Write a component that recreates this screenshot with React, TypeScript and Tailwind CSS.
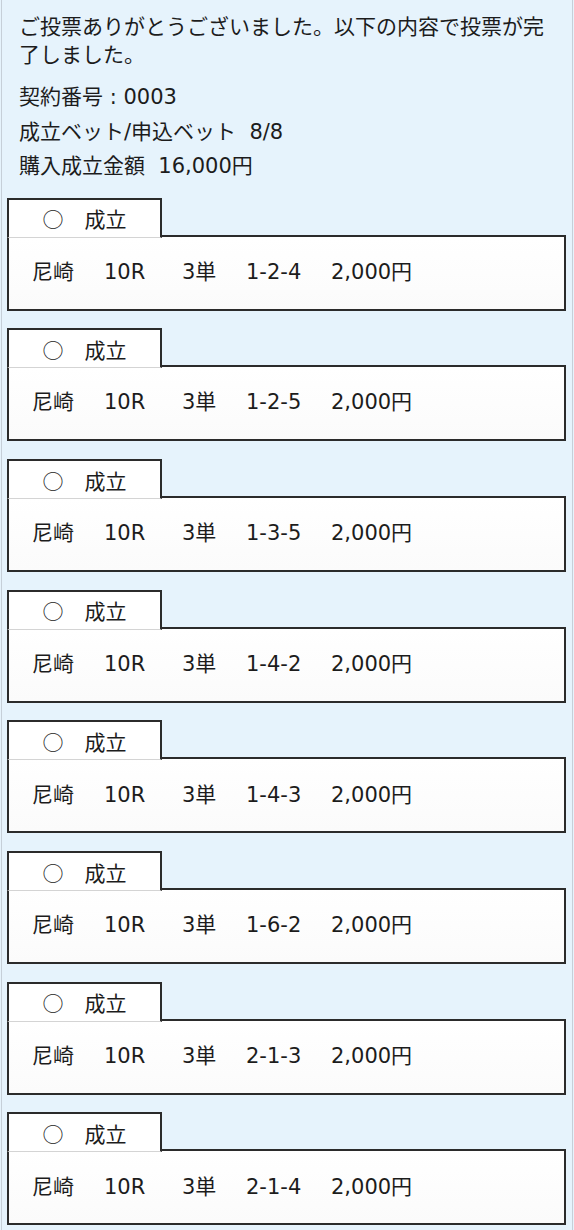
import * as React from 'react';

/**
 * Vote completion screen: summary + list of accepted bets
 */

interface Bet {
    place: string;
    race: string;
    type: string;
    combo: string;
    amount: string;
}

const bets: Bet[] = [
    { place: '尼崎', race: '10R', type: '3単', combo: '1-2-4', amount: '2,000円' },
    { place: '尼崎', race: '10R', type: '3単', combo: '1-2-5', amount: '2,000円' },
    { place: '尼崎', race: '10R', type: '3単', combo: '1-3-5', amount: '2,000円' },
    { place: '尼崎', race: '10R', type: '3単', combo: '1-4-2', amount: '2,000円' },
    { place: '尼崎', race: '10R', type: '3単', combo: '1-4-3', amount: '2,000円' },
    { place: '尼崎', race: '10R', type: '3単', combo: '1-6-2', amount: '2,000円' },
    { place: '尼崎', race: '10R', type: '3単', combo: '2-1-3', amount: '2,000円' },
    { place: '尼崎', race: '10R', type: '3単', combo: '2-1-4', amount: '2,000円' },
];

const cjk = { fontFamily: '"Noto Sans CJK JP", sans-serif' };

function BetCard({ bet }: { bet: Bet }) {
    return (
        <div className="flex flex-col">
            {/* Status tab */}
            <div className="relative z-10 -mb-[3px] flex h-[40px] w-[155px] items-center justify-center border-2 border-b border-[#2b2b2b] border-b-[#d4d4d4] bg-white pt-[2px]">
                <span style={cjk}>○　成立</span>
            </div>

            {/* Bet detail */}
            <div className="flex h-[76px] items-center border-2 border-[#2b2b2b] bg-gradient-to-b from-white to-[#fbfbfb] pl-[23px]">
                <span className="w-[72px]">{bet.place}</span>
                <span className="w-[78px]">{bet.race}</span>
                <span className="w-[64px]">{bet.type}</span>
                <span className="w-[85px]">{bet.combo}</span>
                <span>{bet.amount}</span>
            </div>
        </div>
    );
}

export default function App() {
    return (
        <div
            className="min-h-[1230px] bg-[#e6f3fc] px-px text-[21px] font-normal text-[#1c1c1c]"
            style={{ fontFamily: '"DejaVu Sans", "Noto Sans CJK JP", sans-serif' }}
        >
            <div className="min-h-[1230px] border-x border-[#c6cfd8] pb-[4px] pl-[5px] pr-[6px] pt-[13px]">
                <div className="px-[12px]">
                    <p className="leading-[28px]">
                        ご投票ありがとうございました。以下の内容で投票が完了しました。
                    </p>
                    <div className="mt-[11px] leading-[34.5px]">
                        <p>契約番号 : 0003</p>
                        <p>成立ベット/申込ベット{'\u00a0\u00a0'}8/8</p>
                        <p>購入成立金額{'\u00a0\u00a0'}16,000円</p>
                    </div>
                </div>

                <div className="mt-[14px] flex flex-col gap-[17.7px]">
                    {bets.map((bet, i) => (
                        <BetCard key={i} bet={bet} />
                    ))}
                </div>
            </div>
        </div>
    );
}
